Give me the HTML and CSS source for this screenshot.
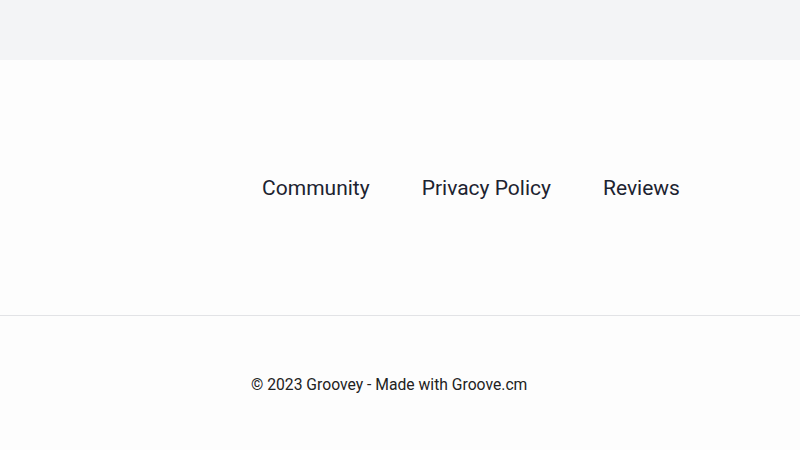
FILE: index.html
```html
<!DOCTYPE html>
<html>
  <head>
    <meta charset="utf-8">
    <title>Groovey</title>
    <link rel="stylesheet" href="styles.css">
  </head>
  <body>
    <div class="top-band"></div>

    <div class="links">
      <ul class="link-list">
        <li><a href="#">Community</a></li>
        <li><a href="#">Privacy Policy</a></li>
        <li><a href="#">Reviews</a></li>
      </ul>
    </div>

    <div class="bottom">
      <p class="copy">&copy; 2023 Groovey - Made with Groove.cm</p>
    </div>
  </body>
</html>
```

FILE: styles.css
```css
html {
  font-family: Roboto, "Liberation Sans", sans-serif;
}
body {
  margin: 0;
  background-color: #fdfdfd;
  color: #1f2937;
}
.top-band {
  height: 60px;
  background-color: #f3f4f6;
}
.links {
  height: 255px;
  display: flex;
  align-items: center;
  justify-content: center;
  padding-left: 142px;
  border-bottom: 1px solid #e2e3e6;
}
.link-list {
  display: flex;
  gap: 52px;
  list-style: none;
  margin: 0;
  padding: 0;
}
.link-list a {
  font-size: 21px;
  color: #1c2330;
  text-decoration: none;
}
.bottom {
  height: 134px;
  display: flex;
  align-items: center;
  padding-left: 251px;
  padding-top: 2px;
  box-sizing: border-box;
}
.copy {
  margin: 0;
  font-size: 15.7px;
  color: #222;
}
```
